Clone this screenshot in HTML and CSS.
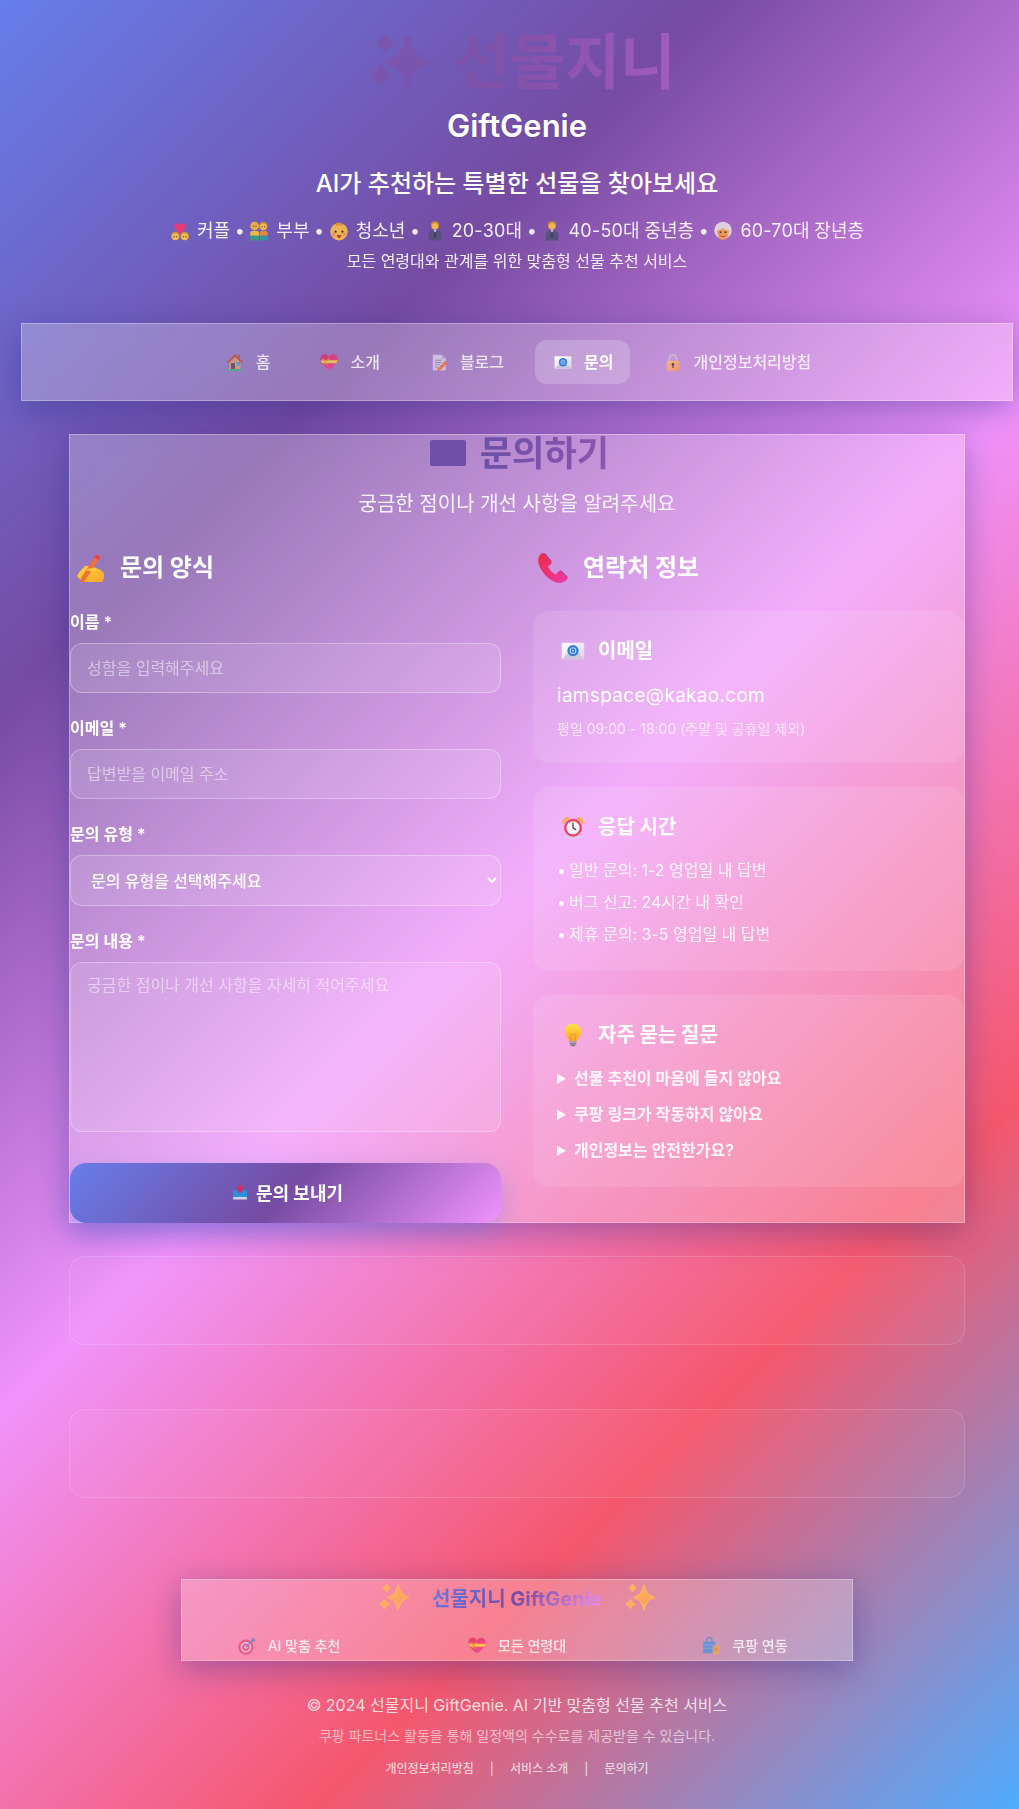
FILE: index.html
```html
<!DOCTYPE html>
<html lang="ko">
<head>
<meta charset="utf-8">
<title>문의하기 - 선물지니 GiftGenie</title>
<link rel="stylesheet" href="styles.css">
</head>
<body>
<svg class="defs" width="0" height="0" aria-hidden="true">
  <defs>
    <linearGradient id="g-orange" x1="0" y1="0" x2="1" y2="1"><stop offset="0" stop-color="#ffc45e"/><stop offset="1" stop-color="#f7935f"/></linearGradient>
    <linearGradient id="g-hand" x1="0" y1="0" x2="1" y2="1"><stop offset="0" stop-color="#ffd23f"/><stop offset="1" stop-color="#f9a825"/></linearGradient>
    <linearGradient id="g-phone" x1="0" y1="0" x2="1" y2="1"><stop offset="0" stop-color="#ee2a3f"/><stop offset="1" stop-color="#e93bb0"/></linearGradient>
    <linearGradient id="g-heart" x1="0" y1="0" x2="1" y2="1"><stop offset="0" stop-color="#d92f5a"/><stop offset="1" stop-color="#f6409a"/></linearGradient>
    <linearGradient id="g-bulb" x1="0" y1="0" x2="0" y2="1"><stop offset="0" stop-color="#ffe14d"/><stop offset="1" stop-color="#fba61f"/></linearGradient>
    <linearGradient id="g-env" x1="0" y1="0" x2="1" y2="1"><stop offset="0" stop-color="#ffffff"/><stop offset="1" stop-color="#dcd2ea"/></linearGradient>
    <symbol id="i-spark" viewBox="0 0 60 54"><path stroke-linejoin="round" d="M38 3C40 16 45 24 58 27C45 30 40 38 38 51C36 38 31 30 18 27C31 24 36 16 38 3ZM15 2C16 4 19 7 21 8C19 9 16 12 15 14C14 12 11 9 9 8C11 7 14 4 15 2ZM11 32C12 35 16 39 19 40C16 41 12 45 11 48C10 45 6 41 3 40C6 39 10 35 11 32Z"/></symbol>
    <symbol id="i-couple" viewBox="0 0 32 32"><path fill="#f5386f" d="M16 21C9 15 7 12 7 8.500a4.800 4.800 0 0 1 9-2.300a4.800 4.800 0 0 1 9 2.300C25 12 23 15 16 21z"/><circle cx="8.500" cy="24" r="7" fill="#d9942e"/><circle cx="8.500" cy="25" r="5.500" fill="#fcc94a"/><circle cx="23.500" cy="24" r="7" fill="#d9942e"/><circle cx="23.500" cy="25" r="5.500" fill="#fcc94a"/><circle cx="6.500" cy="25" r="1" fill="#5a3a2a"/><circle cx="10.500" cy="25" r="1" fill="#5a3a2a"/><circle cx="21.500" cy="25" r="1" fill="#5a3a2a"/><circle cx="25.500" cy="25" r="1" fill="#5a3a2a"/></symbol>
    <symbol id="i-pair" viewBox="0 0 32 32"><circle cx="9" cy="8" r="7" fill="#f2b53a"/><circle cx="23" cy="8" r="7" fill="#d98e32"/><circle cx="23" cy="9" r="5.200" fill="#fcc94a"/><circle cx="7" cy="8" r="1" fill="#5a3a2a"/><circle cx="11" cy="8" r="1" fill="#5a3a2a"/><circle cx="21" cy="9" r="1" fill="#5a3a2a"/><circle cx="25" cy="9" r="1" fill="#5a3a2a"/><rect x="2" y="16" width="14" height="9" rx="3" fill="#f7c638"/><rect x="2" y="23" width="14" height="8" rx="2" fill="#35a37c"/><rect x="17" y="16" width="13" height="9" rx="3" fill="#ef8f35"/><rect x="17" y="23" width="13" height="8" rx="2" fill="#2e9c9a"/></symbol>
    <symbol id="i-baby" viewBox="0 0 32 32"><circle cx="16" cy="17" r="14" fill="#fbbf47"/><path fill="#e8972c" d="M16 2c4 1 6 4 6 7c-4-3-9-3-12 0c0-4 2-6 6-7z"/><circle cx="10.500" cy="17" r="1.800" fill="#4a2d1f"/><circle cx="21.500" cy="17" r="1.800" fill="#4a2d1f"/><circle cx="7" cy="21" r="2.500" fill="#f7946a"/><circle cx="25" cy="21" r="2.500" fill="#f7946a"/><path fill="#c2392f" d="M12.500 22.500h7c0 3-1.500 4.500-3.500 4.500s-3.500-1.500-3.500-4.500z"/></symbol>
    <symbol id="i-man" viewBox="0 0 32 32"><circle cx="16" cy="7" r="6.500" fill="#d9942e"/><circle cx="16" cy="8.500" r="5" fill="#fcc44a"/><path fill="#545078" d="M6 31v-9c0-5 4-8 10-8s10 3 10 8v9z"/><path fill="#e8e2ee" d="M13.500 14h5L16 19z"/><path fill="#3d3a5c" d="M15 17h2l1 8l-2 2l-2-2z"/></symbol>
    <symbol id="i-old" viewBox="0 0 32 32"><circle cx="16" cy="15" r="14" fill="#e4dde2"/><path fill="#f2a24e" d="M6.500 15c3 0 7-2 9-4c2 2 6 4 10 4c.500 8-4 15-9.500 15S6 23 6.500 15z"/><circle cx="12" cy="18" r="1.600" fill="#5a2d1f"/><circle cx="20" cy="18" r="1.600" fill="#5a2d1f"/><path d="M12.500 24c2 1.500 5 1.500 7 0" stroke="#b9452f" stroke-width="1.600" fill="none" stroke-linecap="round"/></symbol>
    <symbol id="i-home" viewBox="0 0 32 32"><rect x="21" y="3" width="4" height="9" fill="#b8533b"/><path fill="#d2a07f" d="M6 14L16 5l10 9v14H6z"/><path fill="#c8503c" d="M16 1L1.500 15l2.500 2.500L16 6l12 11.500l2.500-2.500z"/><rect x="9" y="17" width="7" height="11" fill="#6a4a44"/><rect x="19" y="15" width="6" height="6.500" rx="1" fill="#2fa6e6"/><rect x="2" y="27.500" width="28" height="3.500" rx="1.500" fill="#4caf82"/></symbol>
    <symbol id="i-gift" viewBox="0 0 32 32"><path fill="url(#g-heart)" d="M16 29C6 22 1 17 1 10.500A7.500 7.500 0 0 1 16 7A7.500 7.500 0 0 1 31 10.500C31 17 26 22 16 29z"/><path fill="#fcd13f" d="M1.500 12H31c-.300 2-1 4-2 5.500H4c-1-1.500-2-3.500-2.500-5.500z"/><path fill="#e8862a" d="M10 15L3 10.500l1-2L10 12l6-3.500l1 2zM10 15l-5 6h3l2-3l2 3h3z"/><circle cx="10" cy="14" r="2.500" fill="#f7a73a"/></symbol>
    <symbol id="i-memo" viewBox="0 0 32 32"><path fill="#d8cee6" d="M5 2h16l7 7v21H5z"/><path fill="#b5a8c8" d="M21 2v7h7z"/><path stroke="#8f82a6" stroke-width="1.600" fill="none" d="M9 12h12M9 16h12M9 20h8M9 24h5"/><path fill="#f0763c" d="M27 13l4 4l-13 13l-5 1l1-5z"/></symbol>
    <symbol id="i-mail" viewBox="0 0 32 24"><rect x="1" y="1" width="30" height="22" rx="1.500" fill="url(#g-env)"/><path fill="#cfc5df" d="M1 23l11-11h8l11 11z"/><circle cx="16" cy="11.500" r="7.500" fill="#2f7dd8"/><circle cx="16" cy="11.500" r="3.800" fill="none" stroke="#b7d7f7" stroke-width="1.400"/><circle cx="16" cy="11.500" r="1.300" fill="#b7d7f7"/></symbol>
    <symbol id="i-lock" viewBox="0 0 32 32"><path fill="none" stroke="#c9c3cf" stroke-width="3.500" d="M9.500 15V9a6.500 6.500 0 0 1 13 0v6"/><rect x="5" y="13" width="22" height="18" rx="2.500" fill="url(#g-orange)"/><circle cx="16" cy="19.500" r="2.400" fill="#3d2f4f"/><rect x="15" y="19.500" width="2" height="6.500" fill="#3d2f4f"/></symbol>
    <symbol id="i-hand" viewBox="0 0 30 30"><path fill="url(#g-hand)" d="M2 23c2-4 5-7 8-10c3 0 6 0 8 1c4 1 8 3 10 5c2 3 1 8-1 10H10c-3-1-6-3-8-6z"/><path fill="#f17037" d="M21.500 1.500l4 2.500L9 29l-3.500 0.800L5.500 26z"/><path fill="#e8404f" d="M21.500 1.500l4 2.500l-2 3l-4-2.500z"/><path fill="#ffcb35" d="M12 16c3-1 7-1 9 0c1 1 0 2-1 2c-3 0-6 0-8-.500z"/></symbol>
    <symbol id="i-phone" viewBox="0 0 30 30"><path fill="url(#g-phone)" d="M3 1C0 3-.500 8 1 12c3 8 9 14 16 17c4 1.500 8 1 11-1.500c2-1.500 2-3 1-4l-5-5c-1.500-1-3-1-4 .500l-2 2.500c-3-1-6.500-4.500-8-8l2.500-2c1.500-1 1.500-3 .500-4.500L8.500 2C7 0 5 0 3 1z"/><path fill="#a83c9c" d="M3 1c2-1 4-1 5.500 1l3.500 5c.500.800.800 1.500.700 2.300L6 1.500c-1-.500-2-.700-3-.500zM24 18.500l5 5c.500.500.800 1 .800 1.700l-8-7.500c.700-.300 1.500 0 2.200.800z"/></symbol>
    <symbol id="i-alarm" viewBox="0 0 32 32"><path fill="#f5b13d" d="M2 10c0-4 3-7 7-7c1 0 2 .500 2 1L3.500 12C2.500 12 2 11 2 10zM30 10c0-4-3-7-7-7c-1 0-2 .500-2 1l7.500 8c1 0 1.500-1 1.500-2z"/><path fill="#d8cfe6" d="M7 27h18l2 4H5z"/><circle cx="16" cy="17" r="12" fill="#f23f64"/><circle cx="16" cy="17" r="8.800" fill="#fbf6fb"/><path d="M16 11v6l3.500 2.500" stroke="#4a4358" stroke-width="1.800" fill="none" stroke-linecap="round"/></symbol>
    <symbol id="i-bulb" viewBox="0 0 24 32"><path fill="url(#g-bulb)" d="M12 1C5.500 1 1 5.500 1 11c0 4 2 6.500 4 9c1 1.500 1.500 2.500 1.500 4h11c0-1.500.500-2.500 1.500-4c2-2.500 4-5 4-9C23 5.500 18.500 1 12 1z"/><path fill="none" stroke="#e8962a" stroke-width="1.200" d="M9 24V14l3 2l3-2v10"/><rect x="7" y="24" width="10" height="2.500" rx="1" fill="#a7a0b0"/><rect x="7.500" y="26.500" width="9" height="2.500" rx="1" fill="#8a8396"/><rect x="9" y="29" width="6" height="2" rx="1" fill="#7a7386"/></symbol>
    <symbol id="i-out" viewBox="0 0 32 32"><path fill="#2b8fdb" d="M2 13h8l3 4h6l3-4h8v14H2z"/><rect x="2" y="26" width="28" height="5" rx="1" fill="#cfd3dd"/><path fill="#d92c55" d="M16 1l7 8h-4v8h-6V9H9z"/></symbol>
    <symbol id="i-target" viewBox="0 0 32 32"><circle cx="14" cy="18" r="13.500" fill="#e34f7f"/><circle cx="14" cy="18" r="9.500" fill="#e8c8dc"/><circle cx="14" cy="18" r="6.500" fill="#e34f7f"/><circle cx="14" cy="18" r="3" fill="#e8c8dc"/><path d="M14 18L27 5" stroke="#4b8fd8" stroke-width="2.200"/><path fill="#4b8fd8" d="M24 3l3-3l1 4l4 1l-3 3h-5z"/></symbol>
    <symbol id="i-bag" viewBox="0 0 32 32"><path fill="none" stroke="#4a86d4" stroke-width="2" d="M8 8V6a5 5 0 0 1 10 0v2"/><rect x="2" y="8" width="22" height="21" rx="2" fill="#4f8fdc"/><path stroke="#8fbcef" stroke-width="1.200" d="M2 14h22M2 20h22"/><rect x="19" y="15" width="12" height="16" rx="1.500" fill="#f0a35a"/><path d="M23 19v3a2 2 0 0 0 4 0v-3" stroke="#b76e2e" fill="none" stroke-width="1.200"/></symbol>
  </defs>
</svg>
<div class="page">
  <header class="hero">
    <h1 class="logo"><svg class="logo-spark"><use href="#i-spark"/></svg><span class="grad-text">선물지니</span></h1>
    <div class="brand">GiftGenie</div>
    <p class="tagline">AI가 추천하는 특별한 선물을 찾아보세요</p>
    <p class="targets"><svg class="t-ic"><use href="#i-couple"/></svg>커플 • <svg class="t-ic"><use href="#i-pair"/></svg>부부 • <svg class="t-ic"><use href="#i-baby"/></svg>청소년 • <svg class="t-ic"><use href="#i-man"/></svg><span class="num">20-30대</span> • <svg class="t-ic"><use href="#i-man"/></svg><span class="num">40-50대</span> 중년층 • <svg class="t-ic"><use href="#i-old"/></svg><span class="num">60-70대</span> 장년층</p>
    <p class="targets-sub">모든 연령대와 관계를 위한 맞춤형 선물 추천 서비스</p>
  </header>

  <nav class="nav">
    <a class="nav-item"><svg class="nav-ic"><use href="#i-home"/></svg>홈</a>
    <a class="nav-item"><svg class="nav-ic"><use href="#i-gift"/></svg>소개</a>
    <a class="nav-item"><svg class="nav-ic"><use href="#i-memo"/></svg>블로그</a>
    <a class="nav-item active"><svg class="nav-ic"><use href="#i-mail"/></svg>문의</a>
    <a class="nav-item"><svg class="nav-ic"><use href="#i-lock"/></svg>개인정보처리방침</a>
  </nav>

  <main class="contact">
    <h2 class="contact-title"><span class="title-env"></span><span class="grad-text">문의하기</span></h2>
    <p class="contact-sub">궁금한 점이나 개선 사항을 알려주세요</p>
    <div class="contact-grid">
      <form class="form">
        <h3 class="col-title"><svg class="col-ic"><use href="#i-hand"/></svg>문의 양식</h3>
        <div class="group">
          <label class="label">이름 *</label>
          <input class="field" type="text" placeholder="성함을 입력해주세요">
        </div>
        <div class="group">
          <label class="label">이메일 *</label>
          <input class="field" type="email" placeholder="답변받을 이메일 주소">
        </div>
        <div class="group">
          <label class="label">문의 유형 *</label>
          <select class="field select">
            <option>문의 유형을 선택해주세요</option>
          </select>
        </div>
        <div class="group group-last">
          <label class="label">문의 내용 *</label>
          <textarea class="field area" placeholder="궁금한 점이나 개선 사항을 자세히 적어주세요"></textarea>
        </div>
        <button class="submit" type="button"><svg class="submit-ic"><use href="#i-out"/></svg>문의 보내기</button>
      </form>
      <section class="info">
        <h3 class="col-title"><svg class="col-ic"><use href="#i-phone"/></svg>연락처 정보</h3>
        <div class="card card-mail">
          <h4 class="card-title"><svg class="card-ic"><use href="#i-mail"/></svg>이메일</h4>
          <p class="mail">iamspace@kakao.com</p>
          <p class="mail-note">평일 09:00 - 18:00 (주말 및 공휴일 제외)</p>
        </div>
        <div class="card card-time">
          <h4 class="card-title"><svg class="card-ic"><use href="#i-alarm"/></svg>응답 시간</h4>
          <ul class="time-list">
            <li><span class="dot">•</span>일반 문의: 1-2 영업일 내 답변</li>
            <li><span class="dot">•</span>버그 신고: 24시간 내 확인</li>
            <li><span class="dot">•</span>제휴 문의: 3-5 영업일 내 답변</li>
          </ul>
        </div>
        <div class="card card-faq">
          <h4 class="card-title"><svg class="card-ic"><use href="#i-bulb"/></svg>자주 묻는 질문</h4>
          <details class="faq"><summary>선물 추천이 마음에 들지 않아요</summary></details>
          <details class="faq"><summary>쿠팡 링크가 작동하지 않아요</summary></details>
          <details class="faq"><summary>개인정보는 안전한가요?</summary></details>
        </div>
      </section>
    </div>
  </main>

  <div class="slot slot-first"></div>
  <div class="slot slot-second"></div>

  <div class="promo">
    <div class="promo-title"><svg class="promo-spark"><use href="#i-spark"/></svg><span class="promo-name">선물지니 GiftGenie</span><svg class="promo-spark"><use href="#i-spark"/></svg></div>
    <div class="promo-features">
      <span class="promo-item"><svg class="promo-ic"><use href="#i-target"/></svg>AI 맞춤 추천</span>
      <span class="promo-item"><svg class="promo-ic"><use href="#i-gift"/></svg>모든 연령대</span>
      <span class="promo-item"><svg class="promo-ic"><use href="#i-bag"/></svg>쿠팡 연동</span>
    </div>
  </div>

  <footer class="footer">
    <p class="copy">© 2024 선물지니 GiftGenie. AI 기반 맞춤형 선물 추천 서비스</p>
    <p class="notice">쿠팡 파트너스 활동을 통해 일정액의 수수료를 제공받을 수 있습니다.</p>
    <div class="links"><a>개인정보처리방침</a><span>|</span><a>서비스 소개</a><span>|</span><a>문의하기</a></div>
  </footer>
</div>
</body>
</html>
```
FILE: styles.css
```css
* { box-sizing: border-box; }
html, body { margin: 0; padding: 0; }
body {
  overflow-x: hidden;
  font-family: Inter, "Noto Sans CJK KR", sans-serif;
  color: #fff;
  background: linear-gradient(135deg, #667eea 0%, #764ba2 25%, #f093fb 50%, #f5576c 75%, #4facfe 100%);
}
.defs { display: block; width: 0; height: 0; }
.page { width: 1034px; height: 1809px; }
p, h1, h2, h3, h4, ul { margin: 0; padding: 0; }
svg { flex: none; }

.hero { height: 273px; padding-top: 22px; text-align: center; color: #fff; }
.logo {
  display: flex; justify-content: center; align-items: center; gap: 25px;
  padding-left: 11px; height: 80px;
  font-size: 60px; line-height: 80px; font-weight: 700;
}
.logo .grad-text {
  background: linear-gradient(90deg, #7a53aa, #8852ab 40%, #a25cc0);
  -webkit-background-clip: text; background-clip: text;
  -webkit-text-fill-color: transparent;
}
.logo-spark { width: 60px; height: 54px; fill: #7a55ad; stroke: #7a55ad; stroke-width: 5; }
.brand { margin-top: 4px; font-size: 31px; line-height: 40px; font-weight: 600; text-shadow: 0 1px 2px rgba(0,0,0,.1); }
.tagline { margin-top: 22px; font-size: 24px; line-height: 32px; font-weight: 500; }
.targets { margin-top: 17px; height: 28px; font-size: 18px; line-height: 28px; word-spacing: -.5px; opacity: .9; }
.t-ic { width: 20px; height: 20px; margin-right: 7px; vertical-align: -4px; }
.num { letter-spacing: .2px; }
.targets-sub { margin-top: 4px; font-size: 16px; line-height: 24px; opacity: .9; }

.nav {
  margin: 50px 21px 0; padding: 16px;
  display: flex; justify-content: center; gap: 15px;
  background: rgba(255,255,255,.25);
  border: 1px solid rgba(255,255,255,.3);
  box-shadow: 0 8px 32px rgba(31,38,135,.37);
  backdrop-filter: blur(10px);
}
.nav-item {
  padding: 0 16px 3px; height: 44px; display: flex; align-items: center;
  border-radius: 12px; font-size: 16px; font-weight: 500; color: #fff; opacity: .8;
}
.nav-item.active { background: rgba(255,255,255,.2); font-weight: 700; opacity: 1; }
.nav-ic { width: 18px; height: 19px; margin: 3px 12px 0 3px; }

.contact {
  width: 896px; height: 789px; margin: 33px auto 0;
  border: 1px solid rgba(255,255,255,.3);
  background: rgba(255,255,255,.25);
  box-shadow: 0 8px 32px rgba(31,38,135,.37);
  backdrop-filter: blur(10px);
}
.contact-title {
  display: flex; justify-content: center; align-items: center; gap: 14px;
  height: 36px; margin-bottom: 18px; padding-left: 5px; font-size: 35.2px; line-height: 36px; font-weight: 700;
}
.contact-title .grad-text {
  background: linear-gradient(90deg, #6c4fa6, #8b56ae);
  -webkit-background-clip: text; background-clip: text;
  -webkit-text-fill-color: transparent;
}
.title-env { width: 36px; height: 26px; border-radius: 2px; background: #6f4fa8; }
.contact-sub { font-size: 20px; line-height: 30px; text-align: center; color: rgba(255,255,255,.9); }
.contact-grid { margin-top: 31px; display: grid; grid-template-columns: 431px 431px; gap: 32px; }
.col-title { display: flex; align-items: center; height: 36px; font-size: 24px; line-height: 36px; font-weight: 700; }
.col-ic { width: 30px; height: 30px; margin: 0 15px 0 5px; }

.group { margin-top: 24px; height: 82px; }
.label { display: block; font-size: 16px; line-height: 24px; font-weight: 600; margin-bottom: 9px; }
.field {
  display: block; width: 100%; height: 50px; padding: 14px 16px;
  border: 1px solid rgba(255,255,255,.3); border-radius: 12px;
  background: rgba(255,255,255,.1);
  font: 500 16px Inter, "Noto Sans CJK KR", sans-serif; color: #fff;
}
.field::placeholder { color: rgba(255,255,255,.5); font-weight: 400; }
.select { height: 51px; }
.area { height: 170px; padding-top: 9px; resize: none; }
.group-last { height: 203px; margin-top: 25px; }
.submit {
  display: flex; align-items: center; justify-content: center;
  width: 100%; height: 60px; margin-top: 31px; padding: 0 0 2px 4px;
  border: 0; border-radius: 16px;
  background: linear-gradient(135deg, #667eea 0%, #764ba2 50%, #f093fb 100%);
  color: #fff; font: 700 18px Inter, "Noto Sans CJK KR", sans-serif;
  box-shadow: 0 8px 25px rgba(102,126,234,.4);
}
.submit-ic { width: 16px; height: 16px; margin-right: 8px; }

.card {
  padding: 24px; border-radius: 16px; background: rgba(255,255,255,.1);
  margin-top: 24px;
}
.card-mail { margin-top: 25px; height: 152px; }
.card-time { height: 184px; }
.card-faq { height: 192px; }
.card-title { display: flex; align-items: center; height: 32px; font-size: 20px; line-height: 32px; font-weight: 700; }
.card-ic { width: 24px; height: 24px; margin: 0 13px 0 4px; }
.mail { margin-top: 15px; font-size: 19px; letter-spacing: .3px; line-height: 28px; }
.mail-note { margin-top: 8px; font-size: 14px; line-height: 22px; color: rgba(255,255,255,.7); }
.time-list { margin-top: 11px; list-style: none; }
.time-list li { font-size: 16px; line-height: 32px; color: rgba(255,255,255,.9); }
.dot { margin: 0 3px 0 0; }
.faq summary { font-size: 16px; line-height: 24px; font-weight: 600; color: rgba(255,255,255,.9); }
.faq { margin-top: 12px; }
.card-title + .faq { margin-top: 15px; }

.slot {
  width: 896px; height: 89px; margin: 0 auto;
  border: 1px solid rgba(255,255,255,.15); border-radius: 16px;
  background: rgba(255,255,255,.03);
}
.slot-first { margin-top: 33px; }
.slot-second { margin-top: 64px; }

.promo {
  width: 672px; height: 82px; margin: 81px auto 0;
  border: 1px solid rgba(255,255,255,.3);
  background: rgba(255,255,255,.25);
  box-shadow: 0 8px 32px rgba(31,38,135,.37);
  backdrop-filter: blur(10px);
}
.promo-title { display: flex; justify-content: center; align-items: center; gap: 23px; height: 34px; font-size: 20px; font-weight: 700; }
.promo-spark { width: 30px; height: 27px; fill: url(#g-orange); stroke: #fcaf60; stroke-width: 4; }
.promo-name {
  background: linear-gradient(135deg, #667eea, #764ba2 50%, #f093fb);
  -webkit-background-clip: text; background-clip: text;
  -webkit-text-fill-color: transparent;
}
.promo-features { margin-top: 20px; padding: 0 16px; display: grid; grid-template-columns: repeat(3, 1fr); column-gap: 46px; }
.promo-item { display: flex; align-items: center; justify-content: center; font-size: 14px; font-weight: 500; color: #fff; opacity: .8; line-height: 24px; }
.promo-ic { width: 18px; height: 18px; margin-right: 12px; }

.footer { margin-top: 31px; text-align: center; }
.copy { font-size: 16px; line-height: 26px; color: rgba(255,255,255,.8); }
.notice { margin-top: 6px; font-size: 14px; line-height: 24px; color: rgba(255,255,255,.6); }
.links { margin-top: 11px; display: flex; justify-content: center; gap: 16px; font-size: 12px; line-height: 20px; font-weight: 500; color: rgba(255,255,255,.7); }
```
